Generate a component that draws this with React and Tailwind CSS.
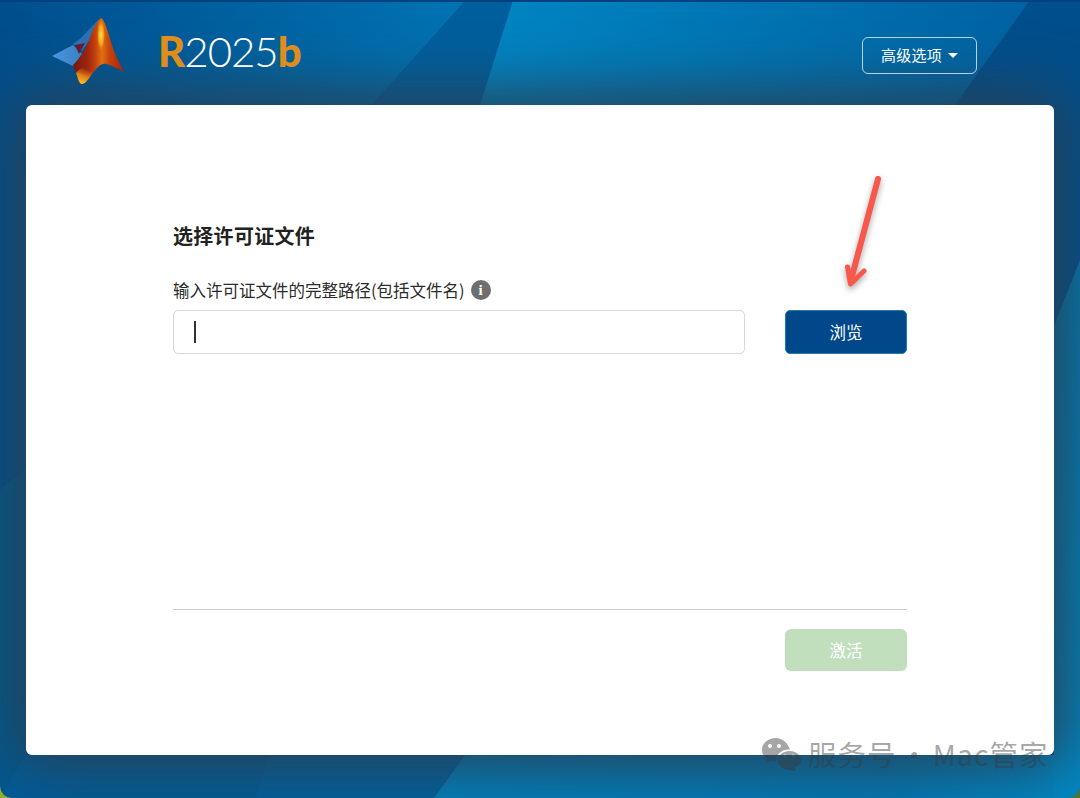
const cjk = "font-['Noto_Sans_CJK_SC','Noto_Sans',sans-serif]";

function Backdrop() {
  return (
    <svg className="absolute inset-0 h-full w-full" viewBox="0 0 1080 798" preserveAspectRatio="none">
      <defs>
        <linearGradient id="topLeft" gradientUnits="userSpaceOnUse" x1="0" y1="0" x2="466" y2="0">
          <stop offset="0" stopColor="#004e8c" />
          <stop offset="1" stopColor="#0073b2" />
        </linearGradient>
        <linearGradient id="topFacet" gradientUnits="userSpaceOnUse" x1="500" y1="0" x2="1030" y2="0">
          <stop offset="0" stopColor="#0084c2" />
          <stop offset="0.6" stopColor="#0070ae" />
          <stop offset="1" stopColor="#0062a2" />
        </linearGradient>
        <linearGradient id="bottomFacet" gradientUnits="userSpaceOnUse" x1="434" y1="798" x2="1080" y2="798">
          <stop offset="0" stopColor="#0080bc" />
          <stop offset="0.7" stopColor="#0078b4" />
          <stop offset="1" stopColor="#0088c4" />
        </linearGradient>
        <linearGradient id="rightFacet" gradientUnits="userSpaceOnUse" x1="0" y1="260" x2="0" y2="798">
          <stop offset="0" stopColor="#0078ae" />
          <stop offset="1" stopColor="#0088c4" />
        </linearGradient>
      </defs>
      <rect width="1080" height="798" fill="#004e8b" />
      <polygon points="0,0 466,0 372,105 0,490" fill="url(#topLeft)" />
      <polygon points="466,0 513,0 480,105 372,105" fill="#005e9d" />
      <polygon points="513,0 1030,0 955,105 480,105" fill="url(#topFacet)" />
      <rect width="1080" height="2" fill="#00417f" />
      <polygon points="0,490 26,468 26,798 0,798" fill="#00588f" />
      <polygon points="26,755 269,755 255,798 0,798" fill="#005c98" />
      <polygon points="269,755 465,755 434,798 255,798" fill="#00609c" />
      <polygon points="465,755 1080,755 1080,798 434,798" fill="url(#bottomFacet)" />
      <polygon points="1080,260 1054,326 1054,798 1080,798" fill="url(#rightFacet)" />
      {/* window corners showing the desktop behind */}
      <path d="M0 786 L0 798 L12 798 Q1 797 0 786 Z" fill="#9ab52a" />
      <path d="M1080 786 L1080 798 L1068 798 Q1079 797 1080 786 Z" fill="#4e7a2e" />
    </svg>
  );
}

function MatlabLogo() {
  return (
    <svg width="76" height="68" viewBox="0 0 76 68" className="shrink-0">
      <defs>
        <linearGradient id="peak" gradientUnits="userSpaceOnUse" x1="24" y1="40" x2="72" y2="40">
          <stop offset="0" stopColor="#7c1810" />
          <stop offset="0.25" stopColor="#9c240e" />
          <stop offset="0.42" stopColor="#c2400e" />
          <stop offset="0.56" stopColor="#e0700f" />
          <stop offset="0.72" stopColor="#c8420d" />
          <stop offset="1" stopColor="#a8240c" />
        </linearGradient>
        <radialGradient id="glow" cx="0.5" cy="0.5" r="0.5">
          <stop offset="0" stopColor="#fde04a" />
          <stop offset="0.6" stopColor="#f8b824" stopOpacity="0.8" />
          <stop offset="1" stopColor="#f4a01e" stopOpacity="0" />
        </radialGradient>
        <linearGradient id="foot" x1="0.3" y1="1" x2="0.6" y2="0.2">
          <stop offset="0" stopColor="#fbc628" />
          <stop offset="0.5" stopColor="#f49a1a" stopOpacity="0.8" />
          <stop offset="1" stopColor="#f08a17" stopOpacity="0" />
        </linearGradient>
        <linearGradient id="wing" x1="0" y1="0.5" x2="1" y2="0.5">
          <stop offset="0" stopColor="#4a97dc" />
          <stop offset="1" stopColor="#3a80c4" />
        </linearGradient>
      </defs>
      <path d="M1 38 L22 27 L31 36 L22 48 Z" fill="url(#wing)" />
      <path d="M22 26 L30 20 L46 3 L50 0 L41 18 L31 33 Z" fill="#2c6fb2" />
      <path d="M24 27 L34 25 L28 36 Z" fill="#6a1a2a" />
      <path d="M50 0 C54 2 57 14 60 24 C63 35 68 45 73 54 C66 50 60 47 55 46 C50 45 46 50 41 56 C37 62 34 66 31 66 C28 66 27 60 25 55 L22 47 C30 40 36 28 40 17 C43 9 47 2 50 0 Z" fill="url(#peak)" />
      <ellipse cx="50" cy="17" rx="4" ry="15" fill="url(#glow)" />
      <path d="M25 55 C29 50 35 47 40 47 C44 50 43 54 41 56 C37 62 34 66 31 66 C28 66 27 60 25 55 Z" fill="url(#foot)" />
    </svg>
  );
}

export default function App() {
  return (
    <div className={`relative flex h-[798px] w-[1080px] flex-col overflow-hidden ${cjk}`}>
      <Backdrop />

      <header className="relative z-10 flex h-[105px] items-center justify-between pl-[51px] pr-[103px]">
        <div className="-mt-[1px] flex items-center gap-[31px]">
          <MatlabLogo />
          <div className="-mt-[2px] flex items-baseline text-[42px] leading-none tracking-[-1px] font-['Lato',sans-serif]">
            <span className="font-black text-[#df8e1c]">R</span>
            <span className="font-light text-white">2025</span>
            <span className="font-black text-[#df8e1c]">b</span>
          </div>
        </div>
        <button className="mt-[5px] flex h-[37px] w-[115px] items-center justify-center gap-[6px] rounded-[6px] border-[1.5px] border-[#b7d3e6] text-[15px] tracking-[0.2px] text-white">
          高级选项
          <span className="h-0 w-0 border-x-[5px] border-t-[5px] border-x-transparent border-t-white" />
        </button>
      </header>

      <main className="relative mx-[26px] flex h-[650px] flex-col rounded-[6px] bg-white px-[147px] pt-[117px] shadow-[0_0_60px_12px_rgba(40,65,85,1)]">
        <h1 className="text-[20px] leading-[28px] tracking-[0.3px] font-semibold text-[#222]">选择许可证文件</h1>

        <div className="mt-[29px] flex items-center gap-[6px] text-[16.5px] leading-[22px] text-[#2b2b2b]">
          输入许可证文件的完整路径(包括文件名)
          <span className="flex h-[20px] w-[20px] items-center justify-center rounded-full bg-[#6e6e6e] font-['Liberation_Serif',serif] text-[15px] leading-none font-bold text-white">
            i
          </span>
        </div>

        <div className="mt-[9px] flex items-center justify-between">
          <div className="flex h-[44px] w-[572px] items-center rounded-[5px] border-[1.5px] border-[#d8d8d8] pl-[20px]">
            <span className="h-[22px] w-[1.5px] bg-[#333]" />
          </div>
          <button className="h-[44px] w-[122px] rounded-[5px] border border-[#1d7fb0] bg-[#00488a] text-[16.5px] text-white">
            浏览
          </button>
        </div>

        <div className="mt-[255px] border-t border-[#cfcfcf]" />

        <div className="mt-[19px] flex justify-end">
          <button className="h-[42px] w-[122px] rounded-[6px] bg-[#c1dfbd] text-[16.5px] text-white">激活</button>
        </div>
      </main>

      {/* annotation arrow */}
      <svg
        className="absolute left-[835px] top-[170px] drop-shadow-[0_3px_3px_rgba(0,0,0,0.35)]"
        width="55"
        height="125"
        viewBox="0 0 55 125"
      >
        <g fill="none" stroke="#f8584c" strokeLinecap="round" strokeLinejoin="round">
          <path d="M43 9 L16 110" strokeWidth="6" />
          <path d="M12.500 97 L15.500 114 L29 101" strokeWidth="5" />
        </g>
      </svg>

      {/* watermark */}
      <div className="absolute left-[761px] top-[737px] flex items-center gap-[6px] text-[28.5px] leading-none tracking-[1px] text-[#3a3a3a]/45 [word-spacing:-4px]">
        <svg width="41" height="34" viewBox="0 0 41 34" fill="#3a3a3a" fillOpacity="0.45">
          <path
            fillRule="evenodd"
            d="M15 1 C7 1 1 6 1 13 C1 17 3 20 6 22 L5 26 L10 23.500 C12 24 13 24.200 15 24.200 C15 17 21 12 29 12.500 C27 6 21 1 15 1 Z M9 7 a2 2 0 1 0 0.01 0 Z M18 7 a2 2 0 1 0 0.01 0 Z"
          />
          <path
            fillRule="evenodd"
            d="M29 14 C22 14 17 18 17 23.500 C17 29 22 33 29 33 L35 35 L34 30.500 C38 28.500 40 26 40 23.500 C40 18 35 14 29 14 Z M24 17.500 a1.800 1.800 0 1 0 0.01 0 Z M32 17.500 a1.800 1.800 0 1 0 0.01 0 Z"
          />
        </svg>
        <span>服务号 · Mac管家</span>
      </div>
    </div>
  );
}
